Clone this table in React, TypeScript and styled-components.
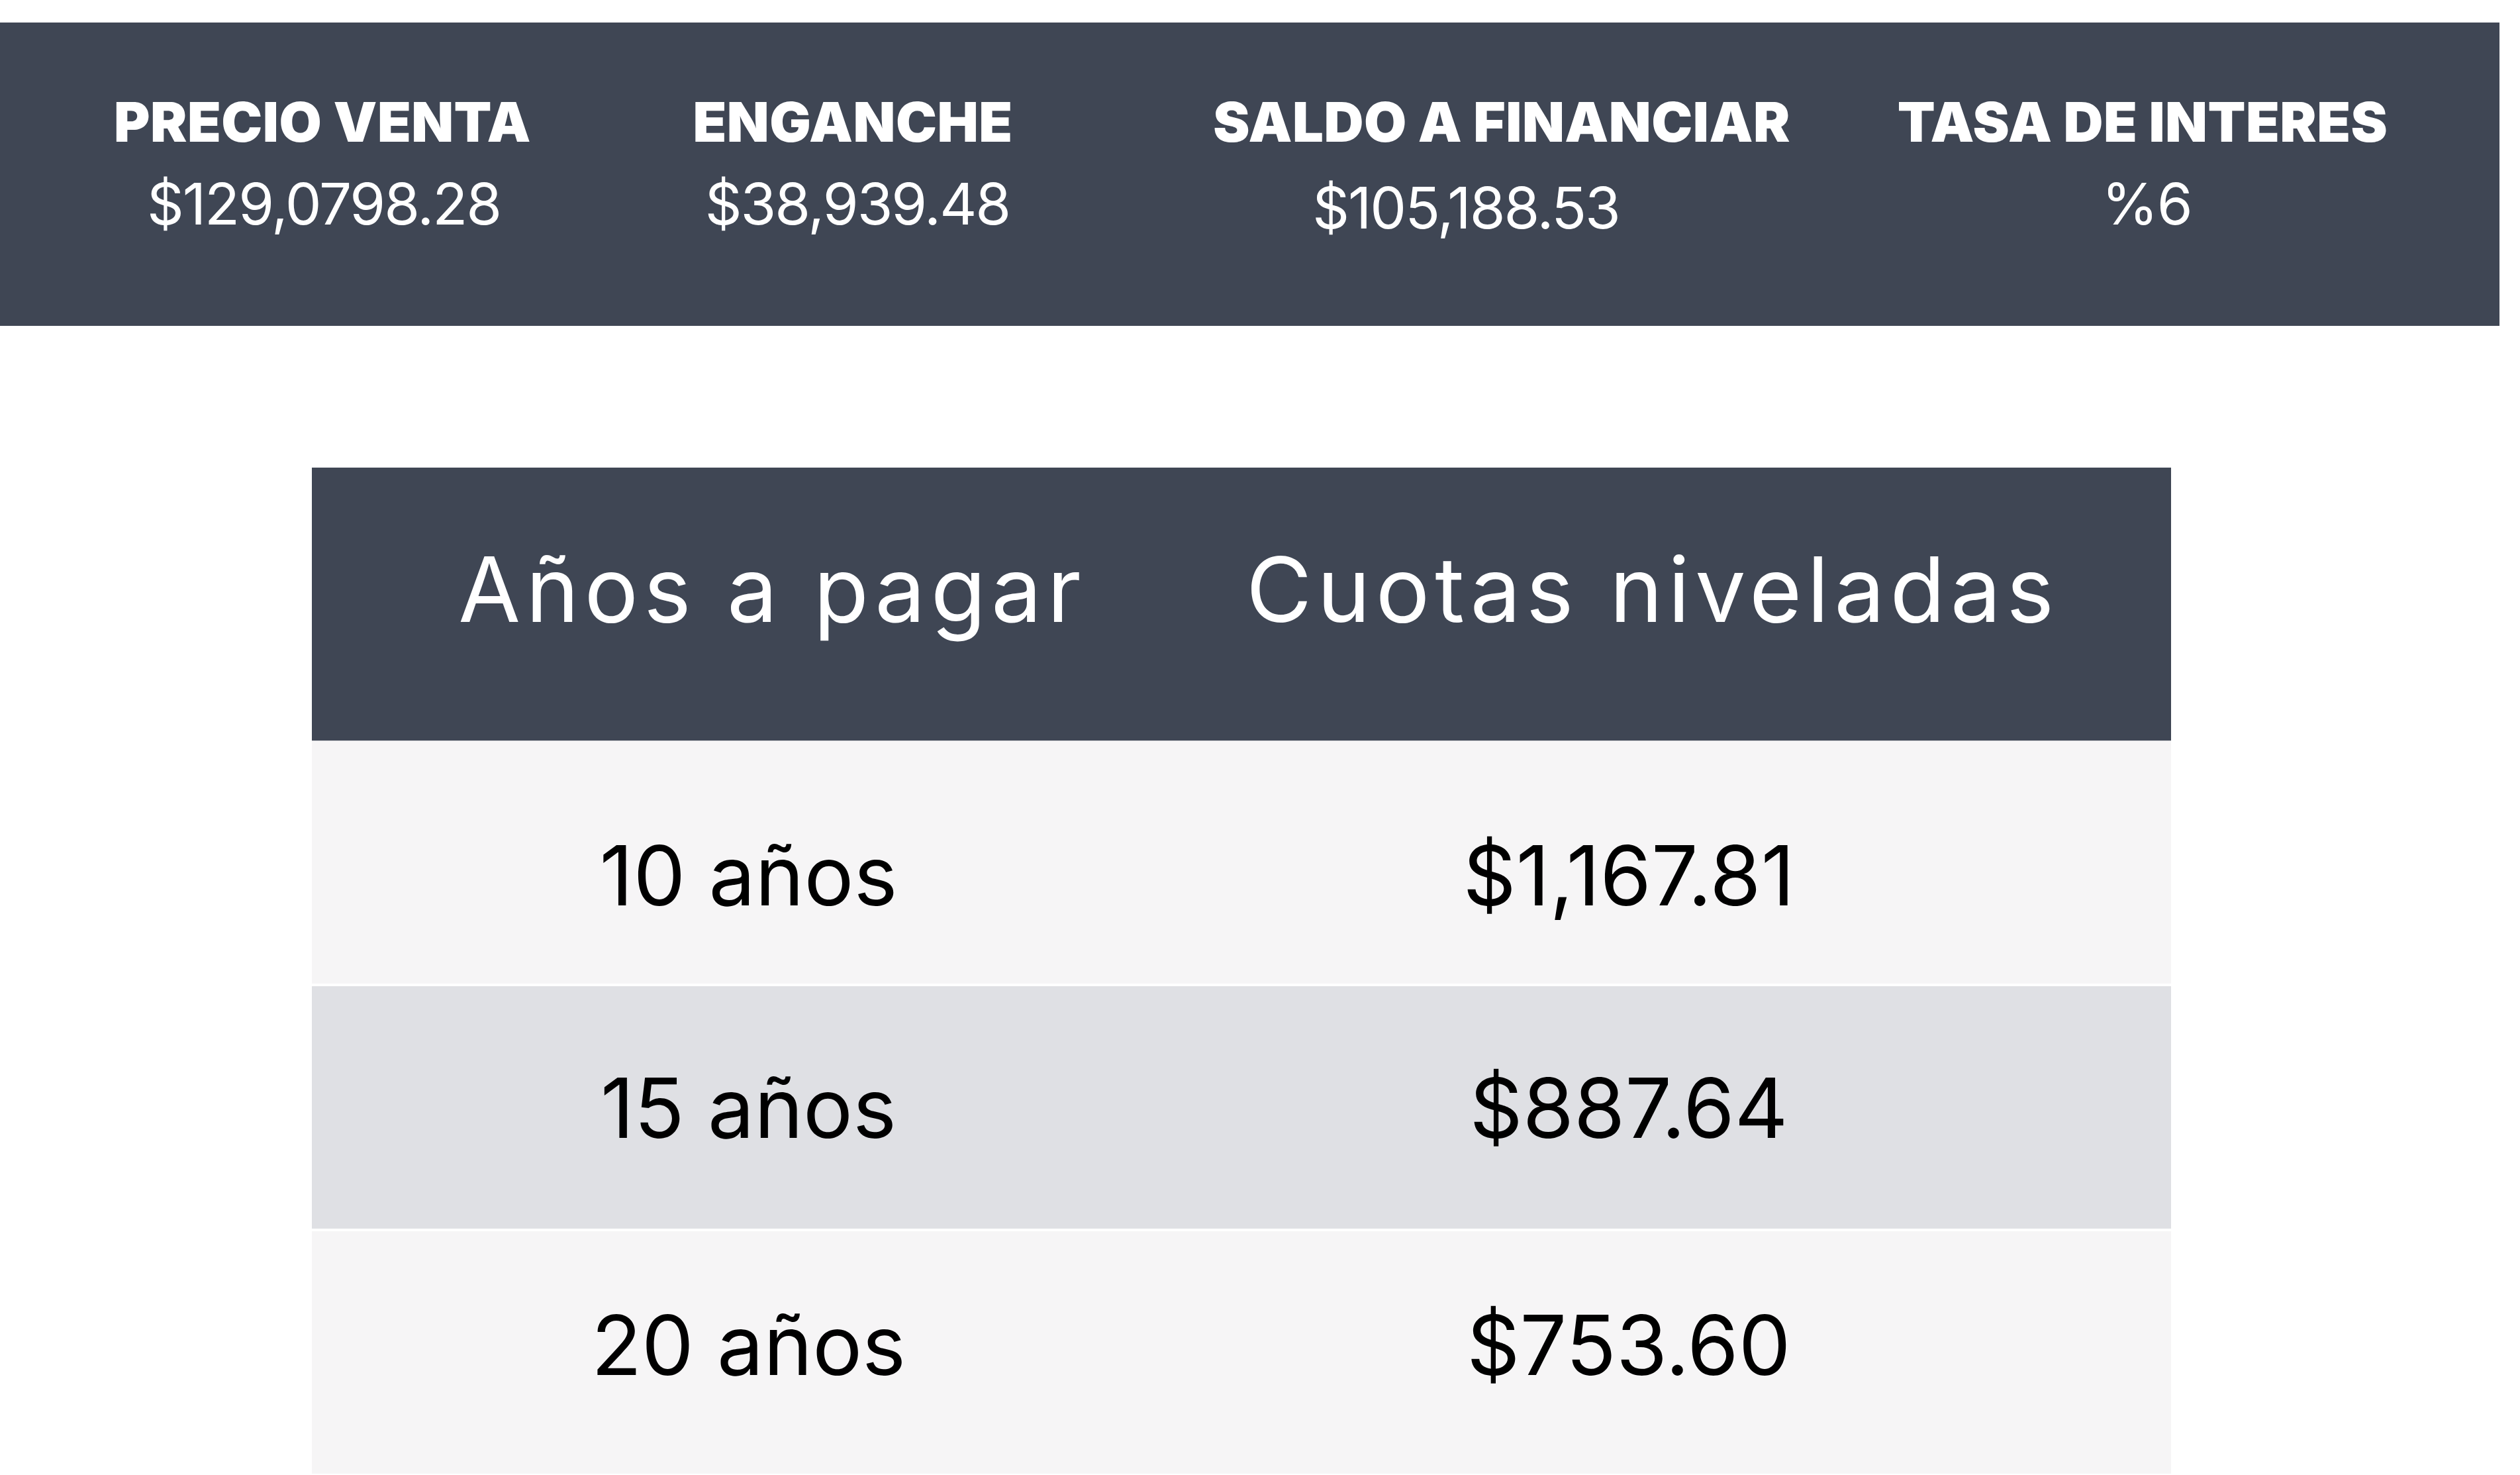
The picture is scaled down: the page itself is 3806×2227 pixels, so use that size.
import React from "react";
import styled, { createGlobalStyle } from "styled-components";

const GlobalStyle = createGlobalStyle`
  html, body {
    margin: 0;
    padding: 0;
    background: #ffffff;
  }
  body {
    font-family: "Inter", "Liberation Sans", sans-serif;
  }
`;

type Stat = {
  label: string;
  value: string;
  shift?: number;
  drop?: number;
};

type Row = {
  years: string;
  fee: string;
  nudge: number;
};

const stats: Stat[] = [
  { label: "PRECIO VENTA", value: "$129,0798.28", shift: 2 },
  { label: "ENGANCHE", value: "$38,939.48", shift: 7 },
  { label: "SALDO A FINANCIAR", value: "$105,188.53", shift: -54, drop: 6 },
  { label: "TASA DE INTERES", value: "%6", shift: 6 },
];

// nudge: how far the text sits off the row's middle
const rows: Row[] = [
  { years: "10 años", fee: "$1,167.81", nudge: 19 },
  { years: "15 años", fee: "$887.64", nudge: 0 },
  { years: "20 años", fee: "$753.60", nudge: -12 },
];

export default function App() {
  return (
    <Page>
      <GlobalStyle />

      <SummaryBar>
        {stats.map((s) => (
          <StatCell key={s.label}>
            <StatLabel>{s.label}</StatLabel>
            <StatValue $shift={s.shift ?? 0} $drop={s.drop ?? 0}>
              {s.value}
            </StatValue>
          </StatCell>
        ))}
      </SummaryBar>

      <Table>
        <HeadRow>
          <HeadCell>Años a pagar</HeadCell>
          <HeadCell>Cuotas niveladas</HeadCell>
        </HeadRow>

        {rows.map((r, i) => (
          <BodyRow key={r.years} $alt={i % 2 === 1} $nudge={r.nudge}>
            <BodyCell>{r.years}</BodyCell>
            <BodyCell>{r.fee}</BodyCell>
          </BodyRow>
        ))}
      </Table>
    </Page>
  );
}

const Page = styled.div`
  padding-top: 34px;
  width: 3806px;
  height: 2227px;
  overflow: hidden;
`;

const SummaryBar = styled.section`
  display: grid;
  grid-template-columns: 974px 628px 1332px 604px 1fr;
  width: 3775px;
  height: 458px;
  box-sizing: border-box;
  padding-top: 109px;
  background: #3f4654;
  color: #ffffff;
`;

const StatCell = styled.div`
  display: flex;
  flex-direction: column;
  align-items: center;
  text-align: center;
`;

const StatLabel = styled.h2`
  margin: 0;
  font-family: "Inter", "Liberation Sans", sans-serif;
  font-size: 83px;
  line-height: 1;
  font-weight: 900;
  letter-spacing: 0.5px;
  white-space: nowrap;
`;

const StatValue = styled.p<{ $shift: number; $drop: number }>`
  margin: ${(p) => 38 + p.$drop}px 0 0;
  font-family: "Inter", "Liberation Sans", sans-serif;
  font-size: 87px;
  line-height: 1;
  font-weight: 400;
  letter-spacing: -2px;
  white-space: nowrap;
  padding-left: ${(p) => (p.$shift > 0 ? p.$shift * 2 : 0)}px;
  padding-right: ${(p) => (p.$shift < 0 ? -p.$shift * 2 : 0)}px;
`;

const Table = styled.div`
  width: 2808px;
  margin: 214px 0 0 471px;
  display: flex;
  flex-direction: column;
`;

const HeadRow = styled.div`
  display: grid;
  grid-template-columns: 1319px 1340px 1fr;
  height: 413px;
  box-sizing: border-box;
  padding-top: 116px;
  background: #3f4654;
  border-bottom: 1px solid #d3d4d8;
  color: #ffffff;
`;

const HeadCell = styled.div`
  padding-left: 72px;
  text-align: center;
  font-family: "Inter", "Liberation Sans", sans-serif;
  font-size: 136px;
  line-height: 1;
  font-weight: 400;
  letter-spacing: 8px;
  white-space: nowrap;
`;

const BodyRow = styled.div<{ $alt: boolean; $nudge: number }>`
  display: grid;
  grid-template-columns: 1319px 1340px 1fr;
  align-items: center;
  height: 366px;
  box-sizing: border-box;
  padding-top: ${(p) => (p.$nudge > 0 ? p.$nudge * 2 : 0)}px;
  padding-bottom: ${(p) => (p.$nudge < 0 ? -p.$nudge * 2 : 0)}px;
  background: ${(p) => (p.$alt ? "#dfe0e4" : "#f6f5f6")};
  color: #000000;

  & + & {
    margin-top: 4px;
  }
`;

const BodyCell = styled.div`
  text-align: center;
  font-family: "Inter", "Liberation Sans", sans-serif;
  font-size: 125px;
  line-height: 1;
  font-weight: 400;
  letter-spacing: 0px;
  white-space: nowrap;
`;
